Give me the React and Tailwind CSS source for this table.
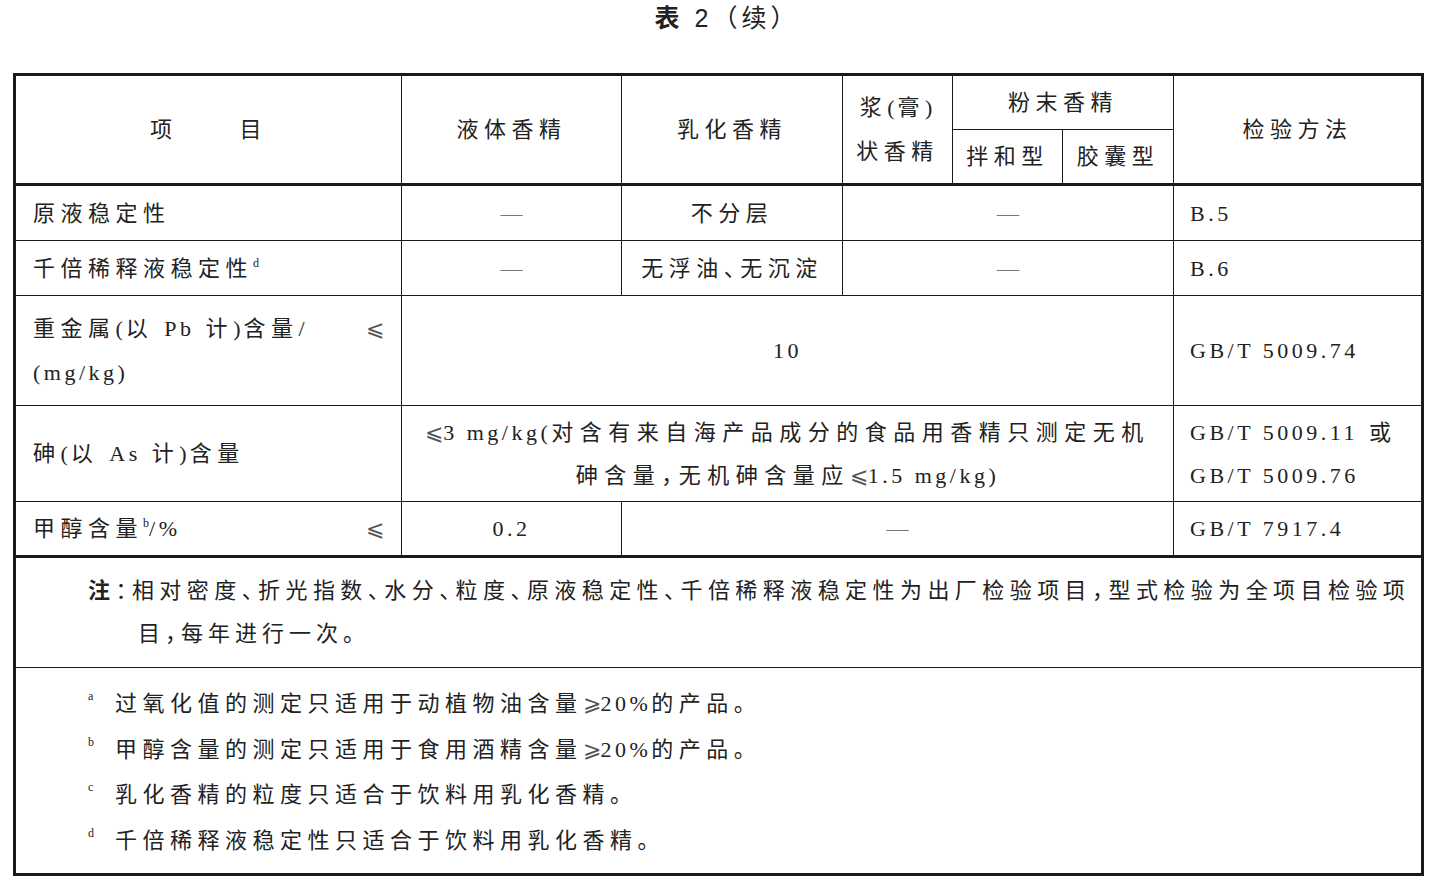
const serif = "[font-family:'Liberation_Serif','Noto_Sans_CJK_SC',serif]"

// half-width punctuation (、，：)
const P = ({ children }) => <span className="[font-feature-settings:'halt']">{children}</span>
// latin runs
const L = ({ children }) => <span className="tracking-[3.5px] [font-family:'Liberation_Serif',serif]">{children}</span>
const Le = () => <span className="[font-family:'DejaVu_Serif',serif] text-[#555] tracking-normal">⩽</span>
const Ge = () => <span className="[font-family:'DejaVu_Serif',serif] text-[#555] tracking-normal">⩾</span>
const Dash = () => <span className="text-[#777] tracking-normal [font-family:'Liberation_Serif',serif]">—</span>

const td = "border border-[#1a1a1a] align-middle p-0"

const App = () => {
    return (
        <div className={`w-[1438px] h-[888px] bg-white text-[#222] ${serif} text-[22px] tracking-[5.5px]`}>
            <div className="h-[73px] pt-[3px] pl-[16px] text-center leading-[30px] text-[25px] tracking-[4px] [font-family:'Liberation_Sans','Noto_Sans_CJK_SC',sans-serif]">
                <span className="font-bold">表</span>
                <span> 2</span>
                <span>（续）</span>
            </div>

            <table className="ml-[13px] w-[1411px] table-fixed border-collapse border-[3px] border-[#1a1a1a]">
                <colgroup>
                    <col className="w-[387px]" />
                    <col className="w-[220px]" />
                    <col className="w-[221px]" />
                    <col className="w-[110px]" />
                    <col className="w-[110px]" />
                    <col className="w-[111px]" />
                    <col className="w-[249px]" />
                </colgroup>
                <tbody>
                    <tr className="h-[55px]">
                        <td rowSpan={2} className={`${td} border-b-[3px] text-center`}>
                            <span>项</span><span className="ml-[62px]">目</span>
                        </td>
                        <td rowSpan={2} className={`${td} border-b-[3px] text-center`}>液体香精</td>
                        <td rowSpan={2} className={`${td} border-b-[3px] text-center`}>乳化香精</td>
                        <td rowSpan={2} className={`${td} border-b-[3px] text-center leading-[44px]`}>
                            浆<span className="tracking-[3px]">(</span>膏<span className="tracking-[3px]">)</span><br />状香精
                        </td>
                        <td colSpan={2} className={`${td} text-center`}>粉末香精</td>
                        <td rowSpan={2} className={`${td} border-b-[3px] text-center`}>检验方法</td>
                    </tr>
                    <tr className="h-[55px]">
                        <td className={`${td} border-b-[3px] text-center`}>拌和型</td>
                        <td className={`${td} border-b-[3px] text-center`}>胶囊型</td>
                    </tr>

                    <tr className="h-[56px]">
                        <td className={`${td} pl-[17px]`}>原液稳定性</td>
                        <td className={`${td} text-center`}><Dash /></td>
                        <td className={`${td} text-center`}>不分层</td>
                        <td colSpan={3} className={`${td} text-center`}><Dash /></td>
                        <td className={`${td} pl-[16px]`}><L>B.5</L></td>
                    </tr>
                    <tr className="h-[55px]">
                        <td className={`${td} pl-[17px]`}>
                            千倍稀释液稳定性<sup className="text-[12px] tracking-normal -top-[9px]">d</sup>
                        </td>
                        <td className={`${td} text-center`}><Dash /></td>
                        <td className={`${td} text-center`}>无浮油<P>、</P>无沉淀</td>
                        <td colSpan={3} className={`${td} text-center`}><Dash /></td>
                        <td className={`${td} pl-[16px]`}><L>B.6</L></td>
                    </tr>
                    <tr className="h-[110px]">
                        <td className={`${td} pl-[17px] pr-[17px] leading-[44px]`}>
                            <div className="flex justify-between">
                                <span>重金属<span className="tracking-[3px]">(</span>以 <L>Pb</L> 计<span className="tracking-[3px]">)</span>含量/</span>
                                <Le />
                            </div>
                            <div><L>(mg/kg)</L></div>
                        </td>
                        <td colSpan={5} className={`${td} text-center`}><L>10</L></td>
                        <td className={`${td} pl-[16px]`}><L>GB/T 5009.74</L></td>
                    </tr>
                    <tr className="h-[96px]">
                        <td className={`${td} pl-[17px]`}>砷<span className="tracking-[3px]">(</span>以 <L>As</L> 计<span className="tracking-[3px]">)</span>含量</td>
                        <td colSpan={5} className={`${td} text-center leading-[43px] tracking-[6.5px]`}>
                            <Le /><L>3 mg/kg(</L>对含有来自海产品成分的食品用香精只测定无机<br />
                            砷含量<P>，</P>无机砷含量应<Le /><L>1.5 mg/kg)</L>
                        </td>
                        <td className={`${td} pl-[16px] leading-[43px]`}>
                            <L>GB/T 5009.11</L> 或<br /><L>GB/T 5009.76</L>
                        </td>
                    </tr>
                    <tr className="h-[55px]">
                        <td className={`${td} border-b-[3px] pl-[17px] pr-[17px]`}>
                            <div className="flex justify-between">
                                <span>甲醇含量<sup className="text-[12px] tracking-normal -top-[9px]">b</sup><L>/%</L></span>
                                <Le />
                            </div>
                        </td>
                        <td className={`${td} border-b-[3px] text-center`}><L>0.2</L></td>
                        <td colSpan={4} className={`${td} border-b-[3px] text-center`}><Dash /></td>
                        <td className={`${td} border-b-[3px] pl-[16px]`}><L>GB/T 7917.4</L></td>
                    </tr>

                    <tr className="h-[111px]">
                        <td colSpan={7} className={`${td} align-top pt-[11px] pl-[72px] pr-[11px] leading-[43px]`}>
                            <div className="whitespace-nowrap tracking-[5px] [text-align-last:justify]">
                                <span className="font-bold">注</span><P>：</P>相对密度<P>、</P>折光指数<P>、</P>水分<P>、</P>粒度<P>、</P>原液稳定性<P>、</P>千倍稀释液稳定性为出厂检验项目<P>，</P>型式检验为全项目检验项
                            </div>
                            <div className="pl-[50px] tracking-[5px]">目<P>，</P>每年进行一次。</div>
                        </td>
                    </tr>
                    <tr className="h-[207px]">
                        <td colSpan={7} className={`${td} align-top pt-[13px] pl-[72px] leading-[45.5px]`}>
                            <div className="flex">
                                <span className="w-[27px] text-[12px] leading-[30px] tracking-normal">a</span>
                                <span>过氧化值的测定只适用于动植物油含量<Ge /><L>20%</L>的产品。</span>
                            </div>
                            <div className="flex">
                                <span className="w-[27px] text-[12px] leading-[30px] tracking-normal">b</span>
                                <span>甲醇含量的测定只适用于食用酒精含量<Ge /><L>20%</L>的产品。</span>
                            </div>
                            <div className="flex">
                                <span className="w-[27px] text-[12px] leading-[30px] tracking-normal">c</span>
                                <span>乳化香精的粒度只适合于饮料用乳化香精。</span>
                            </div>
                            <div className="flex">
                                <span className="w-[27px] text-[12px] leading-[30px] tracking-normal">d</span>
                                <span>千倍稀释液稳定性只适合于饮料用乳化香精。</span>
                            </div>
                        </td>
                    </tr>
                </tbody>
            </table>
        </div>
    )
}

export default App
